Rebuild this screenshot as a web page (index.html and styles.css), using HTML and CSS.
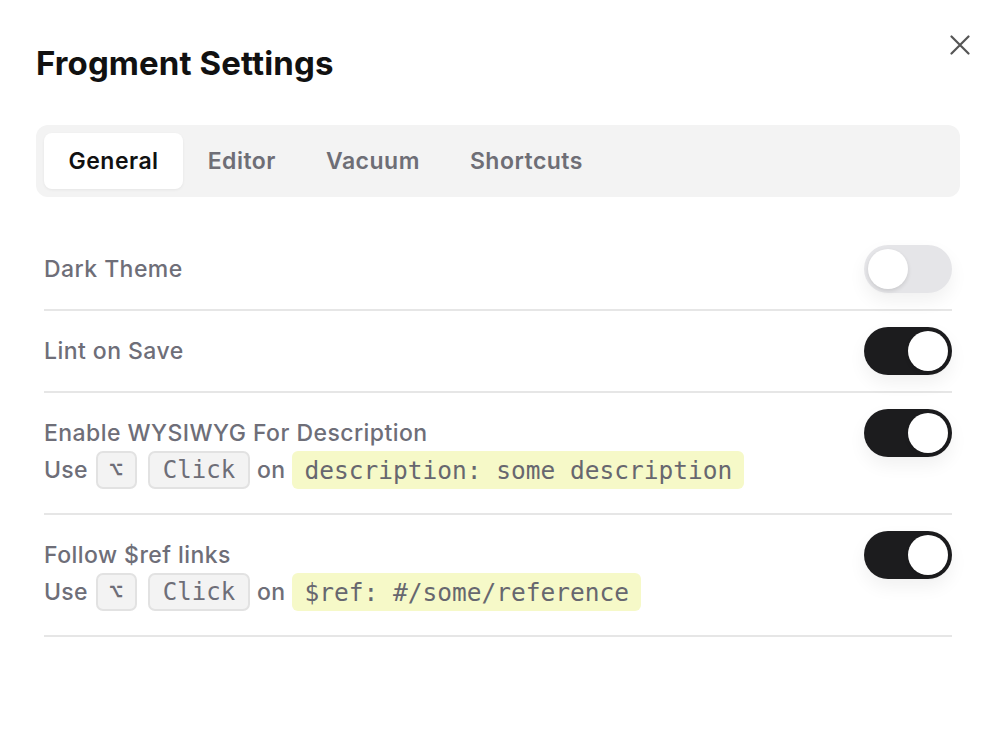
FILE: index.html
```html
<!DOCTYPE html>
<html lang="en">
<head>
<meta charset="utf-8">
<title>Frogment Settings</title>
<link rel="stylesheet" href="styles.css">
</head>
<body>
<div class="dialog">
  <button class="close" aria-label="Close">
    <svg width="20" height="20" viewBox="0 0 20 20"><path d="M1.5 1.5 L18.5 18.5 M18.5 1.5 L1.5 18.5" stroke="#555" stroke-width="2.2" stroke-linecap="round" fill="none"/></svg>
  </button>
  <header class="header">
    <h1 class="title">Frogment Settings</h1>
  </header>
  <nav class="tabs">
    <div class="tab active">General</div>
    <div class="tab">Editor</div>
    <div class="tab">Vacuum</div>
    <div class="tab">Shortcuts</div>
  </nav>
  <div class="rows">
    <div class="row">
      <div class="label-col"><div class="label">Dark Theme</div></div>
      <div class="toggle"><div class="knob"></div></div>
    </div>
    <div class="row">
      <div class="label-col"><div class="label">Lint on Save</div></div>
      <div class="toggle on"><div class="knob"></div></div>
    </div>
    <div class="row">
      <div class="label-col">
        <div class="label">Enable WYSIWYG For Description</div>
        <div class="desc">
          <span>Use</span>
          <kbd class="key key-opt">⌥</kbd>
          <kbd class="key key-next">Click</kbd>
          <span>on</span>
          <code class="code">description: some description</code>
        </div>
      </div>
      <div class="toggle on"><div class="knob"></div></div>
    </div>
    <div class="row">
      <div class="label-col">
        <div class="label">Follow $ref links</div>
        <div class="desc">
          <span>Use</span>
          <kbd class="key key-opt">⌥</kbd>
          <kbd class="key key-next">Click</kbd>
          <span>on</span>
          <code class="code">$ref: #/some/reference</code>
        </div>
      </div>
      <div class="toggle on"><div class="knob"></div></div>
    </div>
  </div>
</div>
</body>
</html>
```

FILE: styles.css
```css
* { box-sizing: border-box; }
html, body {
  margin: 0;
  padding: 0;
  background: #ffffff;
}
body {
  font-family: Inter, "Noto Sans", "Liberation Sans", sans-serif;
  color: #111;
}
.dialog {
  position: relative;
  padding: 43px 42px 0 36px;
}
.close {
  position: absolute;
  top: 35px;
  right: 32px;
  width: 20px;
  height: 20px;
  padding: 0;
  border: 0;
  background: transparent;
  display: flex;
}
.header {
  display: flex;
  align-items: center;
  height: 40px;
}
.title {
  margin: 0;
  font-size: 33px;
  line-height: 40px;
  font-weight: 700;
  letter-spacing: 0.1px;
  color: #111;
}
.tabs {
  margin-top: 42px;
  display: flex;
  height: 72px;
  padding: 8px;
  background: #f3f3f3;
  border-radius: 12px;
}
.tab {
  height: 56px;
  padding: 0 24.5px;
  display: flex;
  align-items: center;
  font-size: 23px;
  letter-spacing: 0.5px;
  font-weight: 600;
  color: #6e6e76;
  border-radius: 8px;
}
.tab.active {
  background: #ffffff;
  color: #111;
  box-shadow: 0 1px 3px rgba(0,0,0,0.06);
}
.tabs .tab:nth-child(3) { padding-left: 25.5px; }
.tabs .tab:nth-child(4) { padding-left: 25.5px; }
.rows {
  margin: 32px 8px 0 8px;
}
.row {
  display: flex;
  justify-content: space-between;
  align-items: flex-start;
  padding: 16px 0;
  border-bottom: 2px solid #e6e6e6;
}
.label-col {
  padding-top: 6px;
  display: flex;
  flex-direction: column;
}
.label {
  font-size: 23px;
  letter-spacing: 0.45px;
  line-height: 36px;
  font-weight: 500;
  color: #6e6e78;
}
.desc {
  display: flex;
  align-items: center;
  gap: 7px;
  height: 38px;
  margin-bottom: 8px;
  font-size: 23px;
  letter-spacing: 0.3px;
  font-weight: 500;
  color: #6e6e78;
}
.key {
  display: inline-flex;
  align-items: center;
  justify-content: center;
  height: 38px;
  padding: 0 13px;
  background: #f3f3f3;
  border: 2px solid #e2e2e2;
  border-radius: 7px;
  font-family: "DejaVu Sans Mono", "Liberation Mono", monospace;
  font-size: 24px;
  letter-spacing: 0;
  color: #6e6e78;
}
.key-opt {
  width: 41px;
  padding: 0;
  margin-left: 1px;
}
.key-next { margin-left: 4px; }
.code {
  display: inline-flex;
  align-items: center;
  height: 38px;
  padding: 0 12px;
  background: #f6f9c8;
  border-radius: 6px;
  font-family: "DejaVu Sans Mono", "Liberation Mono", monospace;
  font-size: 24.5px;
  letter-spacing: 0;
  color: #67676f;
}
.toggle {
  flex: none;
  width: 88px;
  height: 48px;
  border-radius: 24px;
  background: #e5e5e8;
  padding: 4px;
  display: flex;
  justify-content: flex-start;
  box-shadow: 0 8px 18px rgba(0,0,0,0.06);
}
.toggle.on {
  background: #1c1c1e;
  justify-content: flex-end;
}
.knob {
  width: 40px;
  height: 40px;
  border-radius: 50%;
  background: #ffffff;
  box-shadow: 0 2px 4px rgba(0,0,0,0.12);
}
```
